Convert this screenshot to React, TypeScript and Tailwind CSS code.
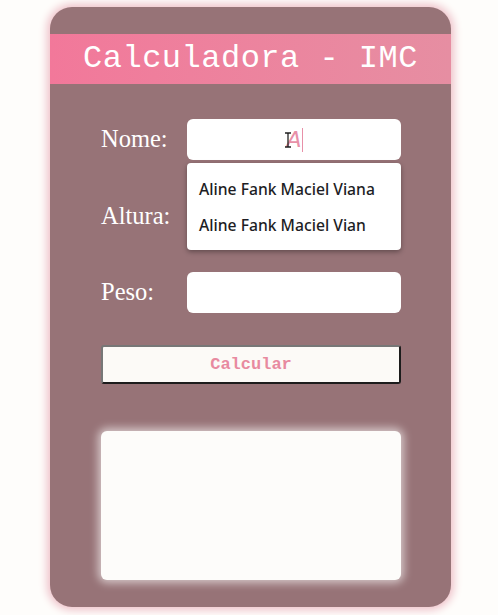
import { useState } from "react";

const mono = "font-['Liberation_Mono','DejaVu_Sans_Mono',monospace]";
const serif = "font-['Liberation_Serif','DejaVu_Serif',serif]";

function Field({ label, children }: { label: string; children: React.ReactNode }) {
  return (
    <div className="flex items-center h-[41px]">
      <label className={`${serif} w-[86px] shrink-0 text-[24.5px] text-white`}>{label}</label>
      {children}
    </div>
  );
}

export default function App() {
  const [nome, setNome] = useState("A");

  return (
    <div className="min-h-[615px] w-[498px] bg-[#fefdfb] pt-[7px] pl-[50px]">
      <div className="w-[401px] h-[600px] rounded-[22px] bg-[#977377] shadow-[0_0_8px_3px_#eec0c8] overflow-hidden">
        <div className="mt-[27px] h-[50px] bg-gradient-to-r from-[#f2789a] to-[#e68ea2] flex items-center justify-center">
          <h1 className={`${mono} text-[32px] tracking-[0.5px] text-white`}>Calculadora - IMC</h1>
        </div>

        <div className="pl-[51px] pt-[35px] flex flex-col gap-[35.5px]">
          <div className="relative">
            <Field label="Nome:">
              <div className="relative">
                <input
                  value={nome}
                  onChange={(e) => setNome(e.target.value)}
                  className="w-[214px] h-[41px] rounded-[6px] bg-white text-center text-[22px] font-light italic text-[#e890a8] font-['DejaVu_Sans',sans-serif] outline-none"
                />
                <svg className="absolute left-[97px] top-[13px]" width="8" height="16" viewBox="0 0 8 16">
                  <path d="M1 1h2.5L4 2l.5-1H7M4 2v12M1 15h2.5L4 14l.5 1H7" fill="none" stroke="#222" strokeWidth="1.3" />
                </svg>
                <span className="absolute left-[115px] top-[9px] w-px h-[24px] bg-[#e890a8]" />
              </div>
            </Field>
            <div className="absolute left-[86px] top-[44px] z-10 w-[214px] h-[87px] rounded-[4px] bg-white shadow-[0_2px_5px_rgba(0,0,0,0.35)] flex flex-col pt-[16px] pl-[12px] gap-[16px] font-['Noto_Sans','Open_Sans',sans-serif] text-[15.7px] font-medium text-[#1d1d24]">
              <div className="leading-[20px]">Aline Fank Maciel Viana</div>
              <div className="leading-[20px]">Aline Fank Maciel Vian</div>
            </div>
          </div>

          <Field label="Altura:">
            <input className="w-[214px] h-[41px] rounded-[6px] bg-white outline-none" />
          </Field>

          <Field label="Peso:">
            <input className="w-[214px] h-[41px] rounded-[6px] bg-white outline-none" />
          </Field>
        </div>

        <div className="px-[51px] pt-[32px]">
          <button
            className={`${mono} w-[300px] h-[39px] rounded-[3px] bg-[#fcfaf7] border-2 border-[#777] border-r-[#1c1c1c] border-b-[#1c1c1c] text-[17px] font-bold text-[#e88aa0]`}
          >
            Calcular
          </button>
        </div>

        <div className="px-[51px] pt-[47px]">
          <div className="w-[300px] h-[149px] rounded-[6px] bg-[#fdfcfa] shadow-[0_0_8px_3px_rgba(255,255,255,0.6)]" />
        </div>
      </div>
    </div>
  );
}
